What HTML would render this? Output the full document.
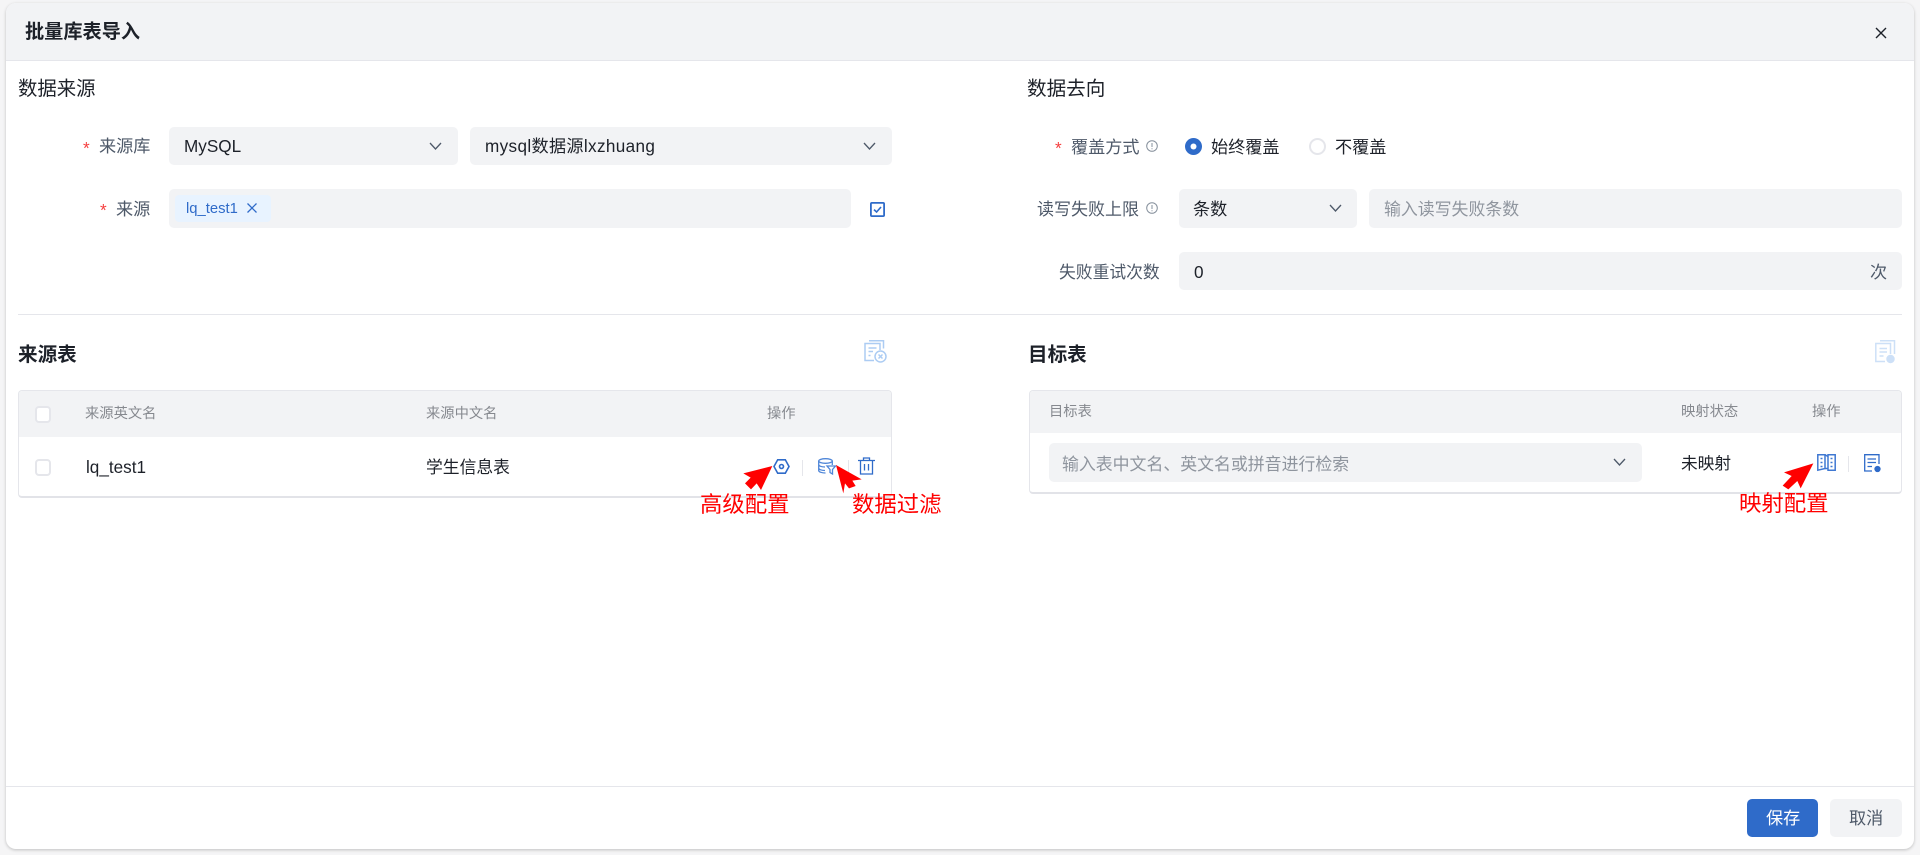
<!DOCTYPE html>
<html lang="zh"><head><meta charset="utf-8"><title>批量库表导入</title>
<style>
html,body{margin:0;padding:0;width:1920px;height:855px;overflow:hidden;background:#f5f5f6}
body{font-family:"Liberation Sans","Noto Sans CJK SC",sans-serif;color:#1d2129;position:relative}
.t{position:absolute;white-space:nowrap;transform:translateY(-50%);line-height:24px;font-size:17.14px}
.b{position:absolute;box-sizing:border-box}
.f{background:#f2f3f5;border-radius:5px}
.l{color:#4e5969}.s{color:#f53f3f}.h{font-size:19.6px}.bd{font-weight:700}
.th{font-size:14.3px;color:#86898f}.ph{color:#8f959e;font-size:16.9px}
.r{color:#ff0000;font-size:22.4px}
svg{position:absolute;overflow:visible}
.cb{position:absolute;width:16px;height:17px;box-sizing:border-box;background:#fff;border:2px solid #e5e6eb;border-radius:4px}
.dv{position:absolute;width:1px;height:16px;background:#e5e6eb}
</style></head><body>
<div class="b" style="left:6px;top:3px;width:1908px;height:846px;background:#fff;border-radius:10px;box-shadow:0 1px 3px rgba(0,0,0,.22);overflow:hidden">
<div class="b" style="left:0;top:0;width:100%;height:58px;background:#f2f3f5;border-bottom:1px solid #e5e6eb"></div>
<div class="b" style="left:0;top:783px;width:100%;height:1px;background:#e5e6eb"></div>
</div>
<div class="t bd" style="left:25px;top:33px;font-size:19.2px">批量库表导入</div>
<svg style="left:1875px;top:27px" width="12" height="12" viewBox="0 0 12 12"><path d="M1 1L11 11M11 1L1 11" stroke="#1d2129" stroke-width="1.4" fill="none"/></svg>

<!-- left form -->
<div class="t h" style="left:18px;top:89px;font-size:19.4px">数据来源</div>
<div class="t s" style="left:83px;top:148px">*</div><div class="t l" style="left:99px;top:146px">来源库</div>
<div class="b f" style="left:169px;top:127px;width:289px;height:38px"></div>
<div class="t" style="left:184px;top:146px">MySQL</div>
<svg style="left:429px;top:142px" width="13" height="8" viewBox="0 0 13 8"><path d="M1 1L6.5 7L12 1" stroke="#4e5969" stroke-width="1.3" fill="none"/></svg>
<div class="b f" style="left:470px;top:127px;width:422px;height:38px"></div>
<div class="t" style="left:485px;top:146px;letter-spacing:.35px">mysql数据源lxzhuang</div>
<svg style="left:863px;top:142px" width="13" height="8" viewBox="0 0 13 8"><path d="M1 1L6.5 7L12 1" stroke="#4e5969" stroke-width="1.3" fill="none"/></svg>

<div class="t s" style="left:100px;top:210px">*</div><div class="t l" style="left:116px;top:209px">来源</div>
<div class="b f" style="left:169px;top:189px;width:682px;height:39px"></div>
<div class="b" style="left:175px;top:195px;width:96px;height:27px;background:#e8f3ff;border-radius:4px"></div>
<div class="t" style="left:186px;top:209px;font-size:14.8px;color:#2f6bc9">lq_test1</div>
<svg style="left:246px;top:202px" width="12" height="12" viewBox="0 0 12 12"><path d="M1.5 1.5L10.5 10.5M10.5 1.5L1.5 10.5" stroke="#2f6bc9" stroke-width="1.3" fill="none"/></svg>
<svg style="left:870px;top:202px" width="15" height="15" viewBox="0 0 15 15"><rect x=".9" y=".9" width="13.2" height="13.2" rx="1" fill="none" stroke="#2f6bc9" stroke-width="1.8"/><path d="M4 7.6L6.6 10L11 5" stroke="#2f6bc9" stroke-width="1.6" fill="none"/></svg>

<div class="b" style="left:18px;top:314px;width:1884px;height:1px;background:#e5e6eb"></div>

<!-- right form -->
<div class="t h" style="left:1027px;top:89px">数据去向</div>
<div class="t s" style="left:1055px;top:148px">*</div><div class="t l" style="left:1071px;top:147px">覆盖方式</div>
<svg style="left:1146px;top:140px" width="12" height="12" viewBox="0 0 12 12"><circle cx="6" cy="6" r="5.3" fill="none" stroke="#86909c" stroke-width="1"/><path d="M6 3V7M6 8.2V9.2" stroke="#86909c" stroke-width="1" fill="none"/></svg>
<svg style="left:1185px;top:138px" width="17" height="17" viewBox="0 0 17 17"><circle cx="8.5" cy="8.5" r="8.5" fill="#2f6bc9"/><circle cx="8.5" cy="8.5" r="3" fill="#fff"/></svg>
<div class="t" style="left:1211px;top:147px">始终覆盖</div>
<svg style="left:1309px;top:138px" width="17" height="17" viewBox="0 0 17 17"><circle cx="8.5" cy="8.5" r="7.5" fill="#fff" stroke="#e5e6eb" stroke-width="2"/></svg>
<div class="t" style="left:1335px;top:147px">不覆盖</div>

<div class="t l" style="left:1037px;top:210px;font-size:17px">读写失败上限</div>
<svg style="left:1146px;top:202px" width="12" height="12" viewBox="0 0 12 12"><circle cx="6" cy="6" r="5.3" fill="none" stroke="#86909c" stroke-width="1"/><path d="M6 3V7M6 8.2V9.2" stroke="#86909c" stroke-width="1" fill="none"/></svg>
<div class="b f" style="left:1179px;top:189px;width:178px;height:39px"></div>
<div class="t" style="left:1193px;top:209px">条数</div>
<svg style="left:1329px;top:204px" width="13" height="8" viewBox="0 0 13 8"><path d="M1 1L6.5 7L12 1" stroke="#4e5969" stroke-width="1.3" fill="none"/></svg>
<div class="b f" style="left:1369px;top:189px;width:533px;height:39px"></div>
<div class="t ph" style="left:1384px;top:210px">输入读写失败条数</div>

<div class="t l" style="left:1059px;top:273px;font-size:16.8px">失败重试次数</div>
<div class="b f" style="left:1179px;top:252px;width:723px;height:38px"></div>
<div class="t" style="left:1194px;top:272px">0</div>
<div class="t l" style="left:1870px;top:272px">次</div>

<!-- source table -->
<div class="t h bd" style="left:18px;top:355px">来源表</div>
<svg style="left:864px;top:340px;opacity:.5" width="23" height="23" viewBox="0 0 23 23" fill="none" stroke="#5c9be8" stroke-width="1.5"><path d="M5 .8H19.500V8.500"/><path d="M10 20.500H1V3.500H16V10"/><path d="M4.500 8H12.500M4.500 11.500H9M4.500 15.500H6.500"/><circle cx="16.500" cy="16.500" r="5.500"/><path d="M14.500 14.500L18.500 18.500M18.500 14.500L14.500 18.500"/></svg>
<div class="b" style="left:18px;top:390px;width:874px;height:108px;border:1px solid #e5e6eb;border-bottom:2px solid #e2e3e8;border-radius:4px;overflow:hidden"><div style="height:46px;background:#f2f3f5"></div></div>
<div class="cb" style="left:35px;top:406px"></div>
<div class="t th" style="left:85px;top:414px">来源英文名</div>
<div class="t th" style="left:426px;top:414px">来源中文名</div>
<div class="t th" style="left:767px;top:414px">操作</div>
<div class="cb" style="left:35px;top:459px"></div>
<div class="t" style="left:86px;top:467px">lq_test1</div>
<div class="t" style="left:426px;top:468px;font-size:16.8px">学生信息表</div>
<svg style="left:773px;top:459px" width="17" height="15" viewBox="0 0 17 15" fill="none" stroke="#2f6bc9" stroke-width="1.600"><path d="M4.700 .8H12.300L16 7.500L12.300 14.200H4.700L1 7.500Z"/><circle cx="8.500" cy="7.500" r="2"/></svg>
<div class="dv" style="left:802px;top:460px"></div>
<svg style="left:818px;top:458px" width="18" height="17" viewBox="0 0 18 17" fill="none" stroke="#4f86d8" stroke-width="1.300"><ellipse cx="7.500" cy="3" rx="6.800" ry="2.300"/><path d="M.7 3V12.500C.7 14 4 15 7.500 15M.7 6.500C.7 8 3.500 9 7 9M.7 10C.7 11.500 3.500 12.500 7 12.500M14.300 3V7"/><path d="M9 8H17.500L14.500 11.500V16L12 14.500V11.500Z"/></svg>
<div class="dv" style="left:848px;top:460px"></div>
<svg style="left:858px;top:457px" width="17" height="18" viewBox="0 0 17 18" fill="none" stroke="#2f6bc9" stroke-width="1.300"><path d="M0 3.500H17M5.500 3.500V1H11.500V3.500M2.500 3.500V17H14.500V3.500M6.500 7V13.500M10.500 7V13.500"/></svg>

<!-- target table -->
<div class="t h bd" style="left:1028px;top:355px">目标表</div>
<svg style="left:1875px;top:340px;opacity:.3" width="20" height="23" viewBox="0 0 20 23" fill="none" stroke="#5c9be8" stroke-width="1.500"><path d="M5 .8H19.500V14"/><path d="M10 21.500H.8V3.500H15.500V14"/><path d="M4.500 8.500H12M4.500 12H12M4.500 16H8.500"/><circle cx="15.500" cy="19" r="3.500" fill="#5c9be8"/></svg>
<div class="b" style="left:1029px;top:390px;width:873px;height:104px;border:1px solid #e5e6eb;border-bottom:2px solid #e2e3e8;border-radius:4px;overflow:hidden"><div style="height:42px;background:#f2f3f5"></div></div>
<div class="t th" style="left:1049px;top:412px">目标表</div>
<div class="t th" style="left:1681px;top:412px">映射状态</div>
<div class="t th" style="left:1812px;top:412px">操作</div>
<div class="b f" style="left:1049px;top:443px;width:593px;height:39px"></div>
<div class="t ph" style="left:1062px;top:465px">输入表中文名、英文名或拼音进行检索</div>
<svg style="left:1613px;top:458px" width="13" height="8" viewBox="0 0 13 8"><path d="M1 1L6.500 7L12 1" stroke="#4e5969" stroke-width="1.300" fill="none"/></svg>
<div class="t" style="left:1681px;top:464px;font-size:16.7px">未映射</div>
<svg style="left:1817px;top:454px" width="19" height="17" viewBox="0 0 19 17" fill="none" stroke="#3f78d2" stroke-width="1.500"><path d="M.8 .8H8V14.500L.8 16.200Z"/><path d="M11 .8H18.200V16.200H11Z"/><path d="M8 .8L11 2.500M8 14.500L11 14.500"/><path d="M3.500 4.500H5.500M3.500 8.500H5.500M3.500 12.500H5.500M13.500 4.500H15.500M13.500 8.500H15.500M13.500 12.500H15.500"/></svg>
<div class="dv" style="left:1848px;top:456px"></div>
<svg style="left:1864px;top:454px" width="17" height="19" viewBox="0 0 17 19" fill="none" stroke="#2f6bc9" stroke-width="1.300"><path d="M15 10V.7H.7V17H8"/><path d="M3.500 5H12M3.500 8.500H12M3.500 12.500H8"/><circle cx="13.500" cy="15" r="2.500" fill="#2f6bc9"/></svg>

<!-- arrows and annotations -->
<svg style="left:735px;top:450px" width="150" height="50" viewBox="0 0 450 150" fill="#ff0000"><path d="M112 48L25 70L47 83L30 100L48 118L65 100L78 120Z"/><path d="M303 45L380 88L352 92L362 108L342 115L330 100L325 130Z"/></svg>
<svg style="left:1770px;top:445px" width="120" height="50" viewBox="0 0 360 150" fill="#ff0000"><path d="M130 55L42 82L65 93L38 122L55 133L82 108L92 130Z"/></svg>
<div class="t r" style="left:700px;top:505px">高级配置</div>
<div class="t r" style="left:852px;top:505px">数据过滤</div>
<div class="t r" style="left:1739px;top:504px">映射配置</div>

<!-- footer -->
<div class="b" style="left:1747px;top:799px;width:71px;height:38px;background:#2f6bc9;border-radius:5px"></div>
<div class="t" style="left:1766px;top:818px;color:#fff">保存</div>
<div class="b f" style="left:1830px;top:799px;width:72px;height:38px"></div>
<div class="t l" style="left:1849px;top:818px">取消</div>
</body></html>
